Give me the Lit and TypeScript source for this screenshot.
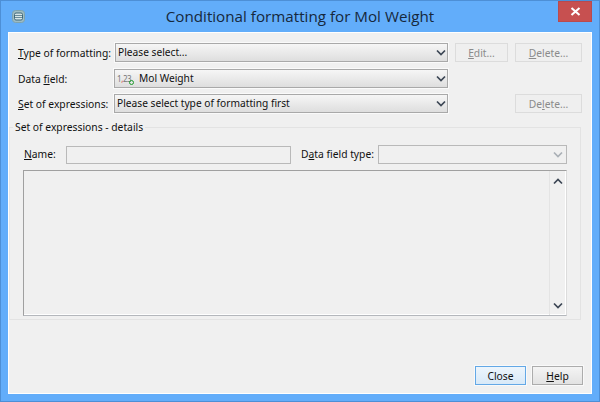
import { LitElement, html, css } from "lit";
import { customElement } from "lit/decorators.js";

const chevron = (up = false) => html`<svg class="chev" width="10" height="7" viewBox="0 0 10 7">
  <path d=${up ? "M1 5.5 5 1.5 9 5.5" : "M1 1.5 5 5.5 9 1.5"} fill="none" stroke="currentColor" stroke-width="1.7"/>
</svg>`;

@customElement("app-root")
export class AppRoot extends LitElement {
  static styles = css`
    :host {
      display: block;
      width: 600px;
      height: 402px;
      font-family: "Noto Sans", sans-serif;
      font-size: 10.3px;
      color: #111;
    }
    .window {
      box-sizing: border-box;
      width: 600px;
      height: 402px;
      display: flex;
      flex-direction: column;
      background: #62adfa;
      border: 1px solid #4d8fd6;
      padding: 0 7px 7px;
    }
    .titlebar {
      height: 31px;
      flex: none;
      display: grid;
      grid-template-columns: 1fr auto 1fr;
    }
    .app-icon {
      margin: 9px 0 0 4px;
      justify-self: start;
    }
    .title {
      font-family: "Open Sans", sans-serif;
      font-size: 15.2px;
      line-height: 30px;
      color: #16283c;
      white-space: nowrap;
    }
    .close-x {
      justify-self: end;
      width: 34px;
      height: 21px;
      background: #c75050;
      border: 1px solid #b84a4f;
      box-sizing: border-box;
      display: flex;
      align-items: center;
      justify-content: center;
    }
    .content {
      flex: 1;
      min-height: 0;
      display: flex;
      flex-direction: column;
      background: #f0f0f0;
      border: 1px solid #fff;
      padding: 10px 0 8px 0;
    }
    .form {
      display: grid;
      grid-template-columns: 89px 334px 53px 67px;
      grid-template-rows: 26px 25px 19px;
      column-gap: 7px;
      margin-left: 9px;
      width: 573px;
    }
    .form label {
      line-height: 21px;
      white-space: nowrap;
    }
    .form .combo.inset {
      margin-left: 1px;
    }
    .combo {
      box-sizing: border-box;
      height: 19px;
      display: flex;
      align-items: center;
      padding: 0 1px 0 2px;
      gap: 3px;
      background: linear-gradient(#f6f6f6, #dedede);
      border: 1px solid #a9a9a9;
      box-shadow: 0 0 0 1px #fafafa;
      white-space: nowrap;
      color: #111;
    }
    .combo span.text {
      flex: 1;
      font-size: 10.2px;
      line-height: 19px;
    }
    .chev {
      flex: none;
      color: #3c4654;
    }
    .type-icon {
      position: relative;
      width: 16px;
      height: 14px;
      font-size: 8px;
      line-height: 13px;
      color: #777;
      letter-spacing: -0.4px;
      margin-right: 3px;
      flex: none;
    }
    .type-icon b {
      font-weight: 400;
      color: #d0453a;
    }
    .type-icon i {
      position: absolute;
      right: -1px;
      bottom: 1px;
      width: 3px;
      height: 3px;
      border: 1.5px solid #1d9a2b;
      border-radius: 50%;
    }
    .btn {
      box-sizing: border-box;
      height: 19px;
      line-height: 18px;
      text-align: center;
      background: #efefef;
      border: 1px solid #dcdcdc;
      color: #8b8b8b;
      white-space: nowrap;
    }
    .spacer {
      grid-column: span 2;
    }
    .second {
      grid-column: 4;
    }
    fieldset {
      flex: none;
      margin: 7px 10px 0 0;
      padding: 11px 13px 3px 13px;
      height: 200px;
      box-sizing: border-box;
      border: 1px solid #e3e3e3;
      border-left-color: #e8e8e8;
      min-width: 0;
    }
    legend {
      padding: 0 2px;
      margin-left: -10px;
      line-height: 14px;
    }
    .field-row {
      display: flex;
      align-items: center;
      height: 19px;
    }
    .field-row label {
      white-space: nowrap;
      line-height: 21px;
    }
    .name-label {
      margin-left: 1px;
      width: 42px;
    }
    .name-input {
      box-sizing: border-box;
      width: 225px;
      height: 18px;
      background: #f0f0f0;
      border: 1px solid #b9b9b9;
    }
    .type-label {
      margin-left: 10px;
      width: 77px;
    }
    .type-combo {
      box-sizing: border-box;
      width: 189px;
      height: 19px;
      display: flex;
      align-items: center;
      justify-content: flex-end;
      padding-right: 3px;
      background: #f0f0f0;
      border: 1px solid #b9b9b9;
    }
    .type-combo .chev {
      color: #aab0b6;
    }
    .pane {
      box-sizing: border-box;
      margin-top: 6px;
      height: 146px;
      width: 544px;
      display: flex;
      justify-content: flex-end;
      border: 1px solid;
      border-color: #a0a0a0 #dcdcdc #b4b7bc #a0a0a0;
      box-shadow: inset -1px -1px 0 #fff;
      background: #f0f0f0;
    }
    .scrollbar {
      box-sizing: border-box;
      width: 17px;
      display: flex;
      flex-direction: column;
      justify-content: space-between;
      align-items: center;
      padding: 7px 0 6px;
      border-left: 1px solid #e4e4e4;
    }
    .footer {
      margin-top: auto;
      align-self: flex-end;
      display: flex;
      gap: 6px;
      margin-right: 8px;
    }
    .footer .btn {
      width: 51px;
      color: #111;
      background: linear-gradient(#f4f4f4, #e2e2e2);
      border-color: #acacac;
      box-shadow: 0 0 0 1px #f9f9f9;
    }
    .footer .btn.default {
      background: linear-gradient(#edf5fc, #d8e9f8);
      border-color: #63a8e6;
    }
  `;

  render() {
    return html`<div class="window">
      <div class="titlebar">
        <svg class="app-icon" width="13" height="13" viewBox="0 0 13 13">
          <rect x="0.5" y="0.5" width="12" height="12" rx="3" fill="#9dbcc4" stroke="#7fa3ae"/>
          <rect x="2.5" y="3" width="8" height="7" rx="1.5" fill="#d6e6e8" stroke="#41687a"/>
          <path d="M3 5.5h7M3 7.5h7" stroke="#6b8d9b"/>
        </svg>
        <div class="title">Conditional formatting for Mol Weight</div>
        <div class="close-x">
          <svg width="11" height="9" viewBox="0 0 11 9">
            <path d="M1.5 1 9.5 8M9.5 1 1.5 8" stroke="#fff" stroke-width="2.1" fill="none"/>
          </svg>
        </div>
      </div>
      <div class="content">
        <div class="form">
          <label><u>T</u>ype of formatting:</label>
          <div class="combo inset"><span class="text">Please select...</span>${chevron()}</div>
          <div class="btn"><u>E</u>dit...</div>
          <div class="btn"><u>D</u>elete...</div>

          <label>Data <u>f</u>ield:</label>
          <div class="combo">
            <span class="type-icon">1<b>,</b>23<i></i></span>
            <span class="text">Mol Weight</span>${chevron()}
          </div>
          <div class="spacer"></div>

          <label><u>S</u>et of expressions:</label>
          <div class="combo"><span class="text">Please select type of formatting first</span>${chevron()}</div>
          <div class="btn second">De<u>l</u>ete...</div>
        </div>

        <fieldset>
          <legend>Set of expressions - details</legend>
          <div class="field-row">
            <label class="name-label"><u>N</u>ame:</label>
            <div class="name-input"></div>
            <label class="type-label">D<u>a</u>ta field type:</label>
            <div class="type-combo">${chevron()}</div>
          </div>
          <div class="pane">
            <div class="scrollbar">${chevron(true)}${chevron()}</div>
          </div>
        </fieldset>

        <div class="footer">
          <div class="btn default">Close</div>
          <div class="btn"><u>H</u>elp</div>
        </div>
      </div>
    </div>`;
  }
}

declare global {
  interface HTMLElementTagNameMap {
    "app-root": AppRoot;
  }
}
